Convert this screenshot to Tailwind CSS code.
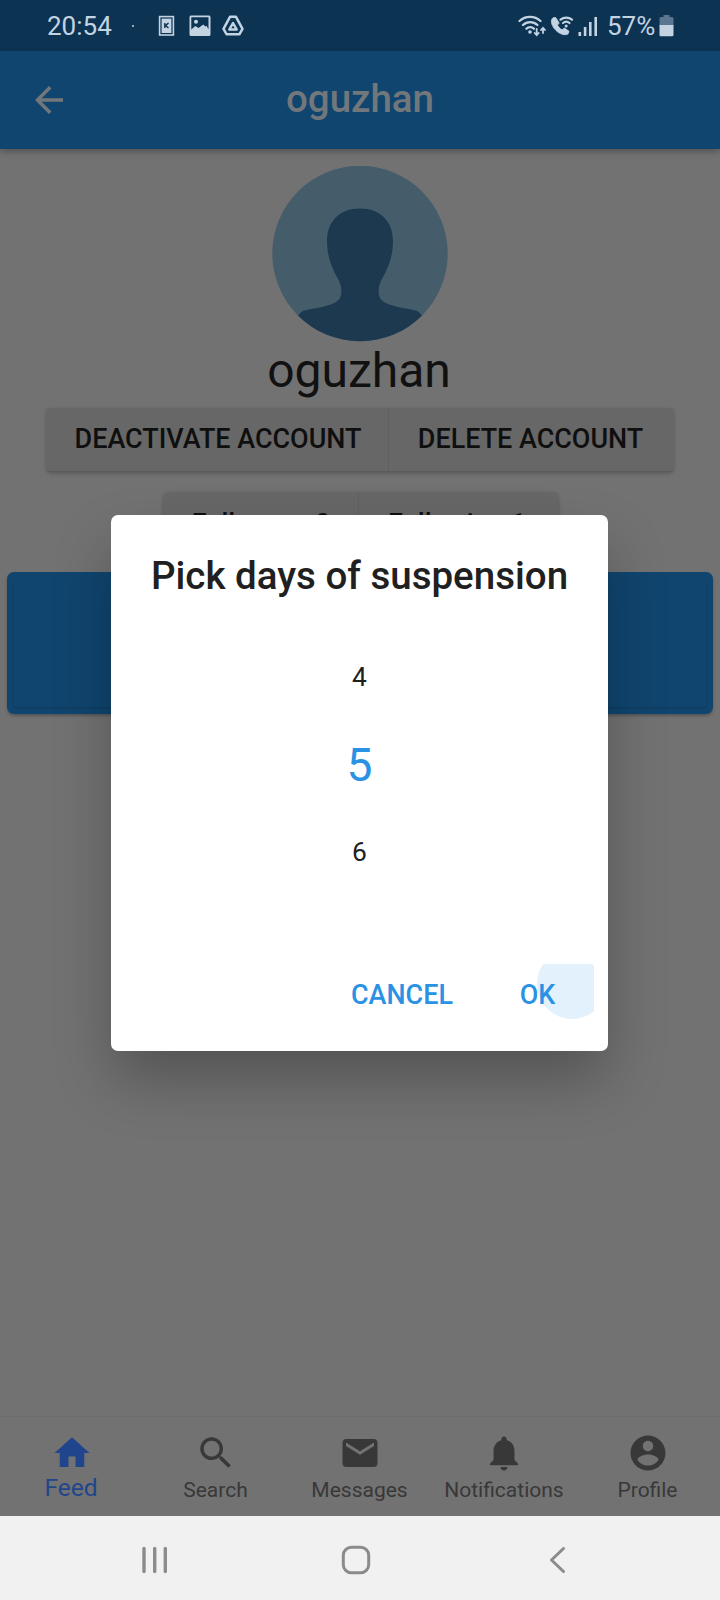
<!DOCTYPE html>
<html lang="en">
<head>
<meta charset="utf-8">
<title>oguzhan</title>
<script src="https://cdn.jsdelivr.net/npm/@tailwindcss/browser@4"></script>
</head>
<body class="bg-[#727272]">
<div class="relative flex h-[1600px] w-[720px] flex-col overflow-hidden bg-[#727272] font-['Roboto',sans-serif]">
  <!-- Status bar -->
  <div class="flex h-[51px] shrink-0 items-center justify-between bg-[#0c3352] pr-[46px] pl-[47px] text-[26px] text-[#c3d3e2]">
    <div class="flex items-center">
      <span class="w-[66px] pt-[2px] whitespace-nowrap">20:54</span>
      <span class="ml-[19px] size-[2px] rounded-full bg-[#c3d3e2]"></span>
      <svg class="ml-[24px] h-[22px] w-[18px]" viewBox="0 0 18 22"><rect x="1.600" y="1.600" width="13.800" height="18.400" fill="none" stroke="#c3d3e2" stroke-width="1.600"/><rect x="3.600" y="3.600" width="9.800" height="14.400" fill="#c3d3e2"/><path d="M6.800 8v5M10.500 8L7.500 10.600L10.500 13" stroke="#0c3352" stroke-width="1.400" fill="none"/></svg>
      <svg class="ml-[13px] h-[22px] w-[22px]" viewBox="0 0 22 22"><path fill="#c3d3e2" fill-rule="evenodd" d="M2 .5h18a1.500 1.500 0 0 1 1.500 1.500v17.500a1.500 1.500 0 0 1-1.500 1.500H2A1.500 1.500 0 0 1 .5 19.500V2A1.500 1.500 0 0 1 2 .5zM2.300 2.300v12.200l4-3.500 3.200 2 4.800-3.500 2 2 1.200-.8 2 3.500V2.300zM7 4.800a2 2 0 1 1 0 4 2 2 0 0 1 0-4z"/></svg>
      <svg class="ml-[11px] h-[22px] w-[22px]" viewBox="0 0 22 22" fill="none" stroke="#c3d3e2" stroke-linejoin="round"><path d="M8 1.800h6l6.500 12-3 5.400h-13l-3-5.400z" stroke-width="2.500"/><path d="M11 8l3.700 6.500H7.300z" stroke-width="2.500"/></svg>
    </div>
    <div class="flex items-center">
      <svg class="h-[22px] w-[29px]" viewBox="0 0 29 22" fill="none" stroke="#c3d3e2" stroke-width="2.300" stroke-linecap="round"><path d="M1.500 6a15.500 15.500 0 0 1 21 0M5 10a10.500 10.500 0 0 1 14.400 0M8.500 13.700a5.500 5.500 0 0 1 7.400 0"/><circle cx="12" cy="17" r="1.800" fill="#c3d3e2" stroke="none"/><path d="M18.700 14v6M16.700 18l2 2.200 2-2.200M25 18v-5M23 15l2-2.200 2 2.200" stroke-width="1.800"/></svg>
      <svg class="ml-[3px] h-[22px] w-[25px]" viewBox="0 0 25 22" fill="none"><path d="M3 2.800c-2.400 2-2.200 6.400 1.500 11s9.500 7.300 13.500 5.200l1-2.700-4.500-3.200-2.500 1.700c-1.500-.7-3.700-2.800-4.500-4.700l1.700-2L5.700 2.500z" fill="#c3d3e2" stroke="#c3d3e2" stroke-width=".8" stroke-linejoin="round"/><path d="M10.500 4.700a9 9 0 0 1 11.500 0M13 8a5 5 0 0 1 6.500 0" stroke="#c3d3e2" stroke-width="2.200" stroke-linecap="round"/><circle cx="16.200" cy="11" r="1.500" fill="#c3d3e2"/></svg>
      <svg class="ml-[3px] h-[22px] w-[20px]" viewBox="0 0 20 22" fill="#c3d3e2"><path d="M.5 17h2.600v4H.5zM5.800 12h2.600v9H5.800zM11 7h2.600v14H11zM16.400 2H19v19h-2.600z"/></svg>
      <span class="ml-[9px] w-[52px] pt-[2px] whitespace-nowrap">57%</span>
      <svg class="h-[22px] w-[15px]" viewBox="0 0 15 22"><path d="M4.500 0h6v2H13a1.500 1.500 0 0 1 1.500 1.500V11H.5V3.500A1.500 1.500 0 0 1 2 2h2.500z" fill="#5a7690"/><path d="M.5 10h14v10a1.300 1.300 0 0 1-1.300 1.300H1.800A1.300 1.300 0 0 1 .5 20z" fill="#c3d3e2"/></svg>
    </div>
  </div>

  <!-- App bar -->
  <header class="z-10 flex h-[98px] shrink-0 items-center bg-[#10456f] px-[28px] shadow-[0_3px_6px_rgba(0,0,0,0.25)]">
    <svg class="size-[42px]" viewBox="0 0 24 24" fill="#72777b"><path d="M20 11H7.830l5.590-5.590L12 4l-8 8 8 8 1.410-1.410L7.830 13H20v-2z"/></svg>
    <h1 class="flex-1 pr-[42px] pb-[2px] text-center text-[38.500px] leading-none font-medium text-[#72777b]">oguzhan</h1>
  </header>

  <!-- Profile -->
  <main class="flex flex-1 flex-col items-center pt-[17px]">
    <svg class="size-[176px] shrink-0" viewBox="0 0 176 176">
      <defs><clipPath id="disc"><circle cx="88" cy="87.500" r="87.700"/></clipPath></defs>
      <g clip-path="url(#disc)"><rect width="176" height="176" fill="#455c6b"/><path fill="#1c394f" d="M88 42.500C68 42.500 55 55 55 75c0 16 5.500 28 10 36 4 7 5 12 4 18-1.500 7-8 9-17 11.500-9 2.500-17 2.500-22 5l-6 6V180h128v-28.500l-6-6c-5-2.500-13-2.500-22-5-9-2.500-15.500-4.500-17-11.500-1-6 0-11 4-18 4.500-8 10-20 10-36 0-20-13-32.500-33-32.500z"/></g>
    </svg>
    <div class="h-[66px] pt-[1px] pr-[2px] text-[48px] leading-[56px] text-[#111]">oguzhan</div>
    <div class="flex h-[63px] shrink-0 rounded-[3px] bg-[#676767] text-[26.950px] leading-[62px] font-medium whitespace-nowrap text-[#0f0f0f] shadow-[0_2px_4px_rgba(0,0,0,0.28)]">
      <div class="w-[342px] border-r border-[#606060] pl-[1px] text-center">DEACTIVATE ACCOUNT</div>
      <div class="w-[284px] pr-[1px] text-center">DELETE ACCOUNT</div>
    </div>
    <div class="mt-[21px] ml-[2px] flex h-[63px] shrink-0 rounded-[5px] bg-[#676767] text-[26.950px] leading-[64px] font-medium whitespace-nowrap text-[#0f0f0f] shadow-[0_2px_4px_rgba(0,0,0,0.28)]">
      <div class="w-[195px] border-r border-[#606060] text-center">Followers 0</div>
      <div class="w-[199px] pr-[3px] text-center">Following 1</div>
    </div>
    <div class="mt-[17px] h-[142px] w-[706px] shrink-0 rounded-[7px] bg-[#10456f] p-[7px] shadow-[0_2px_3px_rgba(0,0,0,0.25)]">
      <div class="h-full rounded-[2px] shadow-[0_1px_2px_rgba(0,0,0,0.18)]"></div>
    </div>
  </main>

  <!-- Bottom tabs -->
  <nav class="grid h-[100px] shrink-0 grid-cols-5 border-t border-[#6c6c6c] text-[21px] leading-[24px] text-[#383838]">
    <div class="flex flex-col items-center pt-[15px] text-[24.500px] text-[#21458c]">
      <svg class="size-[42px] shrink-0" viewBox="0 0 24 24" fill="currentColor"><path d="M10 20v-6h4v6h5v-8h3L12 3 2 12h3v8z"/></svg><span class="mt-[2px] pr-[2px]">Feed</span>
    </div>
    <div class="flex flex-col items-center pt-[15px]">
      <svg class="size-[42px] shrink-0" viewBox="0 0 24 24" fill="currentColor"><path d="M15.500 14h-.79l-.28-.27C15.410 12.590 16 11.110 16 9.500 16 5.910 13.090 3 9.500 3S3 5.910 3 9.500 5.910 16 9.500 16c1.610 0 3.090-.59 4.230-1.570l.27.28v.79l5 4.990L20.490 19l-4.990-5zm-6 0C7.010 14 5 11.990 5 9.500S7.010 5 9.500 5 14 7.010 14 9.500 11.990 14 9.500 14z"/></svg><span class="mt-[4px] pr-[1px]">Search</span>
    </div>
    <div class="flex flex-col items-center pt-[15px]">
      <svg class="size-[42px] shrink-0" viewBox="0 0 24 24" fill="currentColor"><path d="M20 4H4c-1.100 0-1.990.9-1.990 2L2 18c0 1.100.9 2 2 2h16c1.100 0 2-.9 2-2V6c0-1.100-.9-2-2-2zm0 4l-8 5-8-5V6l8 5 8-5v2z"/></svg><span class="mt-[4px] pr-[1px]">Messages</span>
    </div>
    <div class="flex flex-col items-center pt-[15px]">
      <svg class="size-[42px] shrink-0" viewBox="0 0 24 24" fill="currentColor"><path d="M12 22c1.100 0 2-.9 2-2h-4c0 1.100.89 2 2 2zm6-6v-5c0-3.070-1.640-5.640-4.500-6.320V4c0-.83-.67-1.500-1.500-1.500s-1.500.67-1.500 1.500v.68C7.630 5.360 6 7.920 6 11v5l-2 2v1h16v-1l-2-2z"/></svg><span class="mt-[4px]">Notifications</span>
    </div>
    <div class="flex flex-col items-center pt-[15px]">
      <svg class="size-[42px] shrink-0" viewBox="0 0 24 24" fill="currentColor"><path d="M12 2C6.480 2 2 6.480 2 12s4.480 10 10 10 10-4.480 10-10S17.520 2 12 2zm0 3c1.660 0 3 1.340 3 3s-1.340 3-3 3-3-1.340-3-3 1.340-3 3-3zm0 14.200c-2.500 0-4.710-1.280-6-3.220.03-1.990 4-3.080 6-3.080 1.990 0 5.970 1.090 6 3.080-1.290 1.940-3.500 3.220-6 3.220z"/></svg><span class="mt-[4px] pr-[1px]">Profile</span>
    </div>
  </nav>

  <!-- System navigation -->
  <div class="flex h-[84px] shrink-0 items-center bg-[#f1f1f1] pt-[4px] pl-[141px]">
    <svg class="h-[30px] w-[28px]" viewBox="0 0 28 30" stroke="#8b8b8b" stroke-width="3.400" stroke-linecap="round"><path d="M3 3.500v23M13.700 3.500v23M24.300 3.500v23"/></svg>
    <svg class="ml-[172px] size-[30px]" viewBox="0 0 30 30"><rect x="2.300" y="2.300" width="25.400" height="25.400" rx="8" fill="none" stroke="#8b8b8b" stroke-width="3"/></svg>
    <svg class="ml-[177px] h-[30px] w-[20px]" viewBox="0 0 20 30" fill="none" stroke="#8b8b8b" stroke-width="3" stroke-linecap="round" stroke-linejoin="round"><path d="M15.500 3.500L3.500 15l12 11.500"/></svg>
  </div>

  <!-- Dialog -->
  <div class="absolute top-[515px] left-[111px] z-20 flex h-[536px] w-[497px] flex-col rounded-[7px] bg-white text-[#202020] shadow-[0_30px_60px_-3px_rgba(0,0,0,0.28)]">
    <h2 class="pt-[38px] text-center text-[38.500px] leading-[46px] font-medium whitespace-nowrap">Pick days of suspension</h2>
    <div class="mt-[35px] flex flex-col text-center text-[26.400px] leading-[87.500px]">
      <span>4</span>
      <span class="text-[46.200px] text-[#2a92e4]">5</span>
      <span>6</span>
    </div>
    <div class="mt-auto mb-[24px] flex h-[63px] justify-end gap-[14px] pr-[14px] text-[26.950px] leading-[63px] font-medium text-[#2a92e4]">
      <span class="w-[131px] pr-[1px] text-center">CANCEL</span>
      <span class="relative w-[112px] overflow-hidden rounded-[3px] pr-[1px] text-center"><i class="absolute top-[-15px] left-[55px] size-[70px] rounded-full bg-[#e3f1fc]"></i><span class="relative">OK</span></span>
    </div>
  </div>
</div>
</body>
</html>
